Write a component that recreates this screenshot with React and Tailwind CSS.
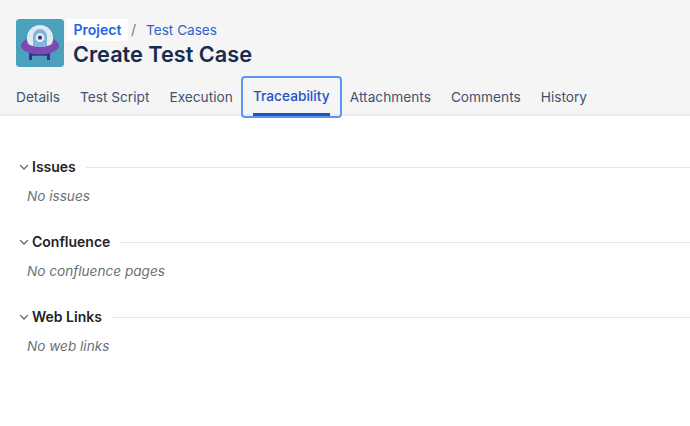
const TABS = ["Details", "Test Script", "Execution", "Traceability", "Attachments", "Comments", "History"];

const SECTIONS = [
  { title: "Issues", empty: "No issues" },
  { title: "Confluence", empty: "No confluence pages" },
  { title: "Web Links", empty: "No web links" },
];

function ProjectLogo() {
  return (
    <svg width="48" height="48" viewBox="0 0 48 48" className="shrink-0 rounded-[3px]">
      <rect width="48" height="48" rx="3" fill="#4ba0bb" />
      <path d="M13 33h3v8h-3zM31 33h3v8h-3z" fill="#3d2d8f" />
      <rect x="13" y="34.5" width="21" height="2.2" fill="#3d2d8f" />
      <ellipse cx="24" cy="26.5" rx="19" ry="9" fill="#7a4bb5" />
      <path d="M11 18.5a13 12.5 0 0 1 26 0c0 6.5-1 9-13 9s-13-2.500-13-9z" fill="#dfeaf2" />
      <path d="M17 27v-9.500a7 7.500 0 0 1 14 0v9.500c-4 .8-10 .8-14 0z" fill="#82b5dc" />
      <circle cx="24" cy="18.7" r="4.400" fill="#e8eff5" />
      <circle cx="24" cy="18.7" r="2.100" fill="#2f3f78" />
    </svg>
  );
}

function Chevron() {
  return (
    <svg width="10" height="10" viewBox="0 0 10 10" fill="none" className="mr-[3px] shrink-0">
      <path d="M1.500 3.500 5 7l3.500-3.500" stroke="#5e6c84" strokeWidth="1.400" strokeLinecap="round" strokeLinejoin="round" />
    </svg>
  );
}

export default function App() {
  return (
    <div className="h-[426px] w-[690px] overflow-hidden bg-white font-['Inter',sans-serif]">
      <div className="h-[116px] border-b-2 border-[#ebecf0] bg-[#f5f5f6] px-[16px] pt-[19px]">
        <div className="flex items-start">
          <ProjectLogo />
          <div className="ml-[9px]">
            <div className="flex h-[22px] items-center leading-[22px]">
              <span className="-ml-[6px] flex h-[22px] w-[61px] items-center justify-center bg-white text-[14px] font-semibold text-[#2563eb]">Project</span>
              <span className="ml-[3px] text-[14px] text-[#6b778c]">/</span>
              <span className="ml-[10px] text-[13.6px] text-[#2f5fd0]">Test Cases</span>
            </div>
            <h1 className="text-[21.7px] font-semibold leading-[27px] text-[#172b4d]">Create Test Case</h1>
          </div>
        </div>
        <div className="mt-[8px] flex items-center">
          {TABS.map((tab) =>
            tab === "Traceability" ? (
              <div key={tab} className="mx-[8px] flex h-[42px] w-[101px] flex-col items-center rounded-[4px] border-2 border-[#5b96f5] px-[10px]">
                <span className="flex-1 pt-[7px] text-[13.7px] font-medium leading-[22px] text-[#2451c4]">{tab}</span>
                <span className="h-[3px] w-full bg-[#2451c4]" />
              </div>
            ) : (
              <span key={tab} className="mr-[20px] text-[13.7px] leading-[22px] text-[#42526e] last:mr-0 [&:nth-child(3)]:mr-0">{tab}</span>
            )
          )}
        </div>
      </div>
      <div className="pl-[19px] pt-[41px]">
        {SECTIONS.map((s) => (
          <section key={s.title} className="mb-[26px]">
            <div className="flex h-[20px] items-center">
              <Chevron />
              <h2 className="text-[14px] font-semibold leading-[20px] text-[#1f2328]">{s.title}</h2>
              <div className="ml-[10px] h-px flex-1 bg-[#e4e6ea]" />
            </div>
            <p className="mt-[9px] pl-[8px] text-[13.6px] italic leading-[20px] text-[#6b6f76]">{s.empty}</p>
          </section>
        ))}
      </div>
    </div>
  );
}
